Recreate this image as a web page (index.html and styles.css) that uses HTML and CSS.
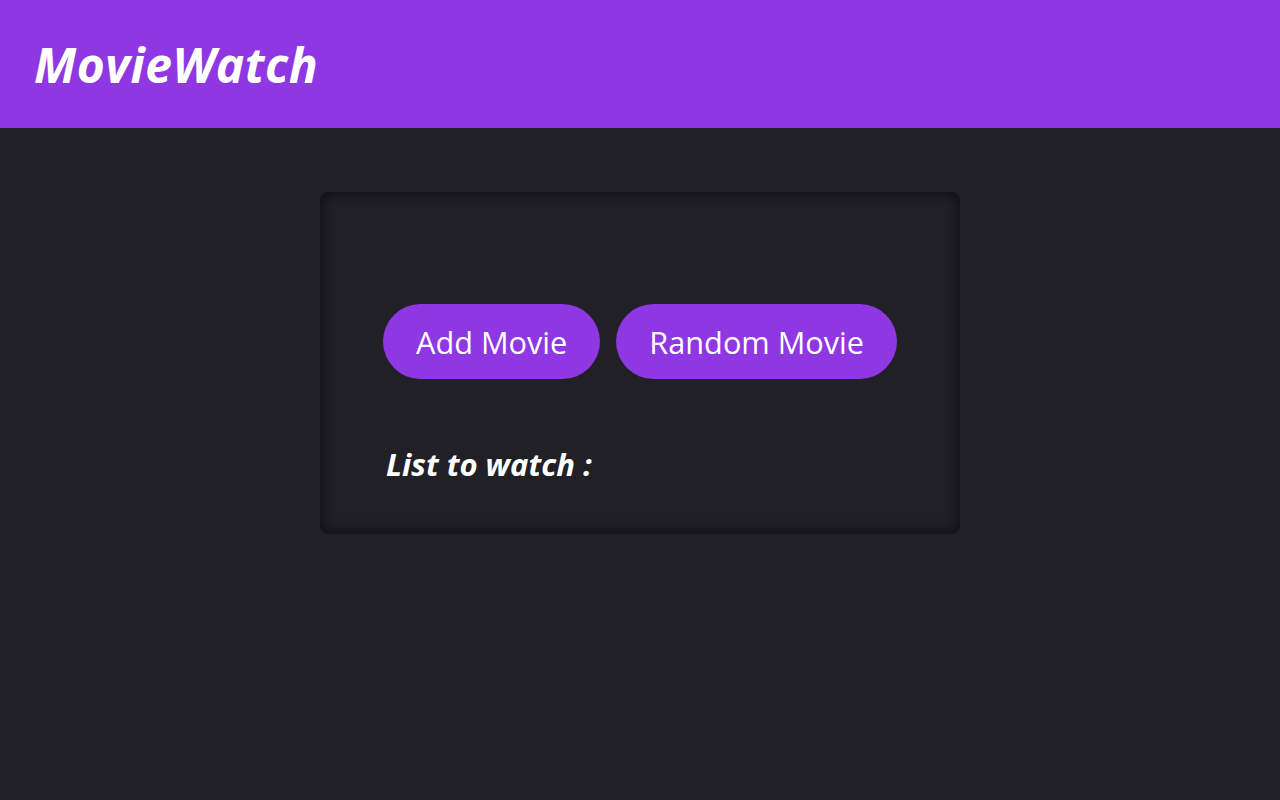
FILE: index.html
```html
<!DOCTYPE html>
<html lang="en">
<head>
<meta charset="utf-8">
<title>MovieWatch</title>
<link rel="stylesheet" href="styles.css">
</head>
<body>
<header class="topbar">
  <h1 class="brand">MovieWatch</h1>
</header>
<main class="page">
  <section class="card">
    <div class="actions">
      <button class="btn">Add Movie</button>
      <button class="btn">Random Movie</button>
    </div>
    <h2 class="list-title">List to watch :</h2>
  </section>
</main>
</body>
</html>
```

FILE: styles.css
```css
* { box-sizing: border-box; }
html, body { margin: 0; padding: 0; }
body {
  background: #222027;
  font-family: "Open Sans", "Noto Sans", sans-serif;
  color: #fff;
  min-height: 800px;
}
.topbar {
  height: 128px;
  background: #8e37e2;
  display: flex;
  align-items: center;
  padding-left: 34px;
}
.brand {
  margin: 0;
  font-size: 48px;
  font-weight: 700;
  font-style: italic;
  letter-spacing: 0.5px;
  color: #fff;
}
.page {
  display: flex;
  justify-content: center;
  padding-top: 64px;
}
.card {
  width: 640px;
  height: 342px;
  border-radius: 8px;
  background: #222027;
  box-shadow: inset 0 0 12px 4px rgba(0,0,0,0.45);
  padding: 112px 0 0 63px;
}
.actions {
  display: flex;
  gap: 16px;
}
.btn {
  flex-shrink: 0;
  white-space: nowrap;
  height: 75px;
  border: none;
  border-radius: 38px;
  background: #8e37e2;
  color: #fff;
  font-family: "Open Sans", "Noto Sans", sans-serif;
  font-size: 30.7px;
  padding: 0 33px;
}
.list-title {
  margin: 64px 0 0 3px;
  font-size: 31px;
  font-weight: 700;
  font-style: italic;
}
```
